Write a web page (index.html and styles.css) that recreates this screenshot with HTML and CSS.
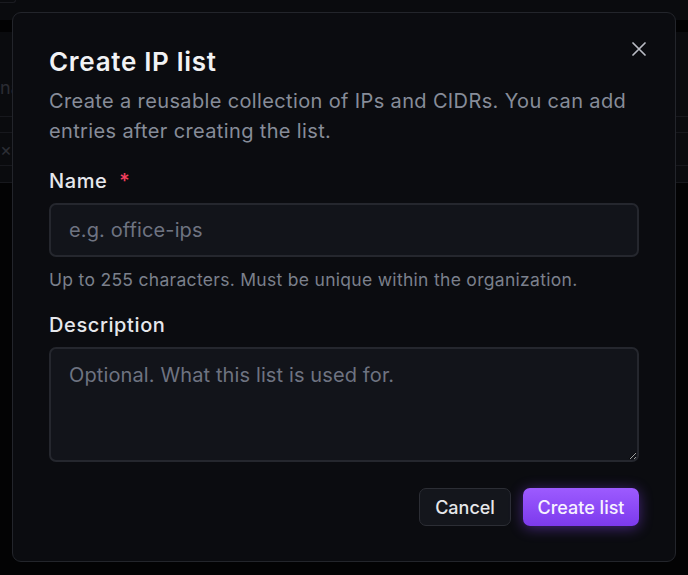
FILE: index.html
```html
<!DOCTYPE html>
<html lang="en">
<head>
<meta charset="utf-8">
<title>Create IP list</title>
<link rel="stylesheet" href="styles.css">
</head>
<body>
<div class="page">
  <div class="bg-top"></div>
  <div class="bg-band"></div>
  <div class="bg-panel"><span class="bg-label">na</span></div>
  <div class="bg-row bg-row-thin"></div>
  <div class="bg-row bg-row-filter"><span class="bg-x">×</span></div>
  <div class="bg-row bg-row-gap"></div>
  <div class="bg-rest"></div>
</div>

<div class="modal" role="dialog" aria-labelledby="dlg-title">
  <button class="close" aria-label="Close">
    <svg width="14" height="14" viewBox="0 0 14 14" fill="none" stroke="currentColor" stroke-width="1.7" stroke-linecap="round"><path d="M1 1L13 13M13 1L1 13"/></svg>
  </button>
  <h2 id="dlg-title" class="title">Create IP list</h2>
  <p class="subtitle">Create a reusable collection of IPs and CIDRs. You can add entries after creating the list.</p>

  <div class="field">
    <label class="label" for="name">Name <span class="req">*</span></label>
    <input id="name" class="input" type="text" placeholder="e.g. office-ips">
    <p class="hint">Up to 255 characters. Must be unique within the organization.</p>
  </div>

  <div class="field field-desc">
    <label class="label" for="desc">Description</label>
    <textarea id="desc" class="textarea" placeholder="Optional. What this list is used for."></textarea>
  </div>

  <div class="actions">
    <button class="btn btn-secondary">Cancel</button>
    <button class="btn btn-primary">Create list</button>
  </div>
</div>
</body>
</html>
```

FILE: styles.css
```css
* { box-sizing: border-box; }
html, body { margin: 0; padding: 0; }
body {
  width: 688px;
  height: 575px;
  overflow: hidden;
  background: #030304;
  font-family: Inter, "Noto Sans", sans-serif;
  position: relative;
}

/* dimmed page behind the dialog */
.page {
  display: flex;
  flex-direction: column;
  background: #0a0b0e;
}
.bg-top {
  width: 16px;
  height: 3px;
  border-right: 1px solid #1a1b20;
  border-bottom: 1px solid #1a1b20;
  border-bottom-right-radius: 5px;
  margin-bottom: 17px;
}
.bg-band { height: 12px; background: #020203; }
.bg-panel {
  height: 85px;
  background: #0a0b0e;
  border-bottom: 1px solid #17181d;
  display: flex;
  align-items: flex-end;
  padding: 0 0 17px 0;
}
.bg-label {
  font-size: 18px;
  line-height: 22px;
  color: #2a2c33;
}
.bg-row-thin { height: 16px; border-bottom: 1px solid #17181d; }
.bg-row-filter {
  height: 33px;
  border-bottom: 1px solid #17181d;
  display: flex;
  align-items: center;
}
.bg-x { color: #2c2e35; font-size: 18px; }
.bg-row-gap { height: 17px; border-bottom: 1px solid #17181d; }
.bg-rest { height: 392px; background: #030304; }

/* dialog */
.modal {
  position: absolute;
  left: 12px;
  top: 12px;
  width: 664px;
  height: 550px;
  background: #0b0c10;
  border: 1px solid #23252b;
  border-radius: 9px;
  padding: 33px 36px 35px 36px;
  display: flex;
  flex-direction: column;
}
.close {
  position: absolute;
  top: 29px;
  right: 29px;
  width: 14px;
  height: 14px;
  padding: 0;
  border: 0;
  background: transparent;
  color: #b9bcc4;
  display: flex;
}
.title {
  margin: 0;
  font-size: 26px;
  line-height: 32px;
  font-weight: 600;
  color: #f1f2f4;
  letter-spacing: 0.7px;
}
.subtitle {
  margin: 8px 0 0;
  font-size: 20px;
  line-height: 30px;
  color: #878c99;
  letter-spacing: 0.36px;
}
.field { display: flex; flex-direction: column; margin-top: 21px; }
.field-desc { margin-top: 19px; }
.label {
  font-size: 20px;
  line-height: 28px;
  font-weight: 500;
  color: #e6e8ec;
  letter-spacing: 0.6px;
}
.req { color: #f43f5e; margin-left: 6px; }
.input, .textarea {
  margin-top: 8px;
  width: 100%;
  background: #12141a;
  border: 2px solid #25272e;
  border-radius: 7px;
  color: #e5e7eb;
  font-family: inherit;
  font-size: 20px;
  letter-spacing: 0.12px;
  outline: none;
}
.input { height: 54px; padding: 0 18px; }
.textarea {
  height: 115px;
  padding: 12px 18px;
  line-height: 28px;
  resize: vertical;
}
.input::placeholder, .textarea::placeholder { color: #6e7381; }
.hint {
  margin: 11px 0 0;
  font-size: 17.5px;
  line-height: 24px;
  color: #7b808c;
  letter-spacing: 0.3px;
}
.actions {
  margin-top: auto;
  display: flex;
  justify-content: flex-end;
  gap: 12px;
}
.btn {
  height: 38px;
  border-radius: 7px;
  font-family: inherit;
  font-size: 18px;
  font-weight: 500;
  letter-spacing: 0;
  padding: 0 14px;
  white-space: nowrap;
}
.btn-secondary {
  background: #14161c;
  border: 1.5px solid #2c2e35;
  color: #e6e7ea;
  width: 92px;
}
.btn-primary {
  background: linear-gradient(180deg, #9d5bff 0%, #7c3aed 100%);
  border: 0;
  color: #f7f2ff;
  width: 116px;
  box-shadow: 0 2px 14px rgba(139, 72, 255, 0.45);
}
```
